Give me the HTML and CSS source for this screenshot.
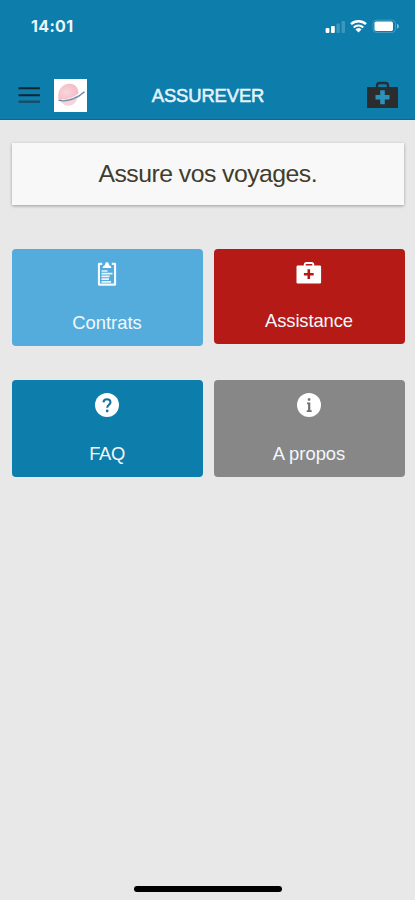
FILE: index.html
```html
<!DOCTYPE html>
<html lang="fr">
<head>
<meta charset="utf-8">
<title>ASSUREVER</title>
<link rel="stylesheet" href="styles.css">
</head>
<body>
<div class="app">
  <header class="header">
    <div class="status">
      <span class="time">14:01</span>
      <svg class="signals" width="76" height="18" viewBox="0 0 76 18">
        <g fill="#fff">
          <rect x=".6" y="11" width="3.8" height="5" rx="1"/>
          <rect x="6" y="9" width="3.8" height="7" rx="1"/>
          <rect x="11.400" y="6.500" width="3.400" height="9.500" rx="1" opacity=".2"/>
          <rect x="16.600" y="4" width="3.400" height="12" rx="1" opacity=".2"/>
          <path d="M30.500 12.500 33.500 15.600l3-3.100a4.300 4.300 0 0 0-6 0z"/>
          <rect x="49.500" y="4.500" width="18.500" height="9.600" rx="1.800"/>
          <path d="M72 6.800v4.900q1.900-.9 1.900-2.450t-1.900-2.450z" opacity=".5"/>
        </g>
        <g fill="none" stroke="#fff">
          <path d="M26 7.200a11 11 0 0 1 15 0" stroke-width="2.500"/>
          <path d="M28.700 10.500a7 7 0 0 1 9.600 0" stroke-width="2"/>
          <rect x="48" y="3.100" width="22.500" height="12.400" rx="3.600" stroke-width=".9" opacity=".25"/>
        </g>
      </svg>
    </div>
    <div class="toolbar">
      <svg class="menu" width="24" height="18" viewBox="0 0 24 18">
        <path d="M1.500 2.300h21.500M1.500 9.200h21.500" stroke="#15252d" stroke-width="2"/>
        <path d="M1.500 15.700h21.500" stroke="#1d485f" stroke-width="2.2"/>
      </svg>
      <svg class="logo" width="33" height="33" viewBox="0 0 33 33">
        <defs><radialGradient id="globe" cx=".4" cy=".55" r=".6">
          <stop offset="0" stop-color="#fad5dc"/><stop offset="1" stop-color="#f3bcc7"/>
        </radialGradient></defs>
        <rect width="33" height="33" fill="#fff"/>
        <path d="M15 4.800c5.500-.5 9.500 3.700 9.500 9.400C19.500 19 12 21 4.600 20.200 2.800 12 7.500 5.300 15 4.800z" fill="url(#globe)"/>
        <path d="M6.500 22.300q8.500.5 17-3.600c-1.500 5.600-5.600 8.400-10 8-2.800-.3-5.200-1.800-7-4.400z" fill="#f8d3db"/>
        <path d="M4.500 21.200C14 23 24 19 30.500 12.800" fill="none" stroke="#7486a3" stroke-width="1.500"/>
        <path d="M8 21.500C17 22 23 18.500 28 15" fill="none" stroke="#83b0bf" stroke-width=".7" stroke-dasharray="3 2"/>
      </svg>
      <h1 class="title">ASSUREVER</h1>
      <svg class="kit" width="31" height="28" viewBox="0 0 31 28">
        <path d="M10 7V4.500Q10 2 12.500 2h6Q21 2 21 4.500V7" fill="none" stroke="#262e32" stroke-width="2.300"/>
        <rect y="6" width="31" height="21" rx=".8" fill="#2a2c2d"/>
        <path d="M13.200 9.200h4.600v4.700h4.700v4.600h-4.700v4.700h-4.600v-4.700H8.500v-4.600h4.700z" fill="#2c91bb"/>
      </svg>
    </div>
  </header>
  <main class="content">
    <p class="banner"><span>Assure vos voyages.</span></p>
    <nav class="grid">
      <a class="tile light">
        <svg width="24" height="26" viewBox="0 0 24 26">
          <path d="M4.200 1.800h3v2.200H5V22.600h14V4h-2.200V1.800h3q1.300 0 1.300 1.300v20.300q0 1.300-1.300 1.300H4.200q-1.300 0-1.300-1.300V3.100q0-1.300 1.300-1.300z" fill="#f4faff"/>
          <path d="M7.600 6.900q.1-2.200 2.300-3 .3-2.900 2.100-2.900t2.100 2.900q2.200.8 2.300 3z" fill="#fff"/>
          <path d="M6.500 10h6M6.500 12.700h11M6.500 15.400h8M6.500 18.100h7.500M6.500 20.800h9.500" stroke="#eaf5fc" stroke-width="1.700"/>
        </svg>
        <span class="contracts">Contrats</span>
      </a>
      <a class="tile red">
        <svg width="26" height="24" viewBox="0 0 26 24">
          <path d="M8.700 5V3.700q0-1.700 1.700-1.700h5.200q1.700 0 1.700 1.700V5" fill="none" stroke="#fff" stroke-width="1.800"/>
          <rect x=".5" y="4.500" width="24.600" height="18" rx="1.300" fill="#fff"/>
          <path d="M12.800 8.300v9.800M7.900 13.200h9.800" stroke="#b51a16" stroke-width="2.600"/>
        </svg>
        <span class="assist">Assistance</span>
      </a>
      <a class="tile blue">
        <svg width="24" height="24" viewBox="0 0 24 24">
          <circle cx="12" cy="12" r="12" fill="#fff"/>
          <path d="M8.500 9.400Q8.600 6.200 12 6.200t3.500 3c0 2.500-3.300 2.700-3.300 5.600" fill="none" stroke="#176f99" stroke-width="2"/>
          <circle cx="12.200" cy="17.900" r="1.350" fill="#176f99"/>
        </svg>
        <span class="faq">FAQ</span>
      </a>
      <a class="tile gray">
        <svg width="24" height="24" viewBox="0 0 24 24">
          <circle cx="12" cy="12" r="12" fill="#fff"/>
          <path d="M10 9.600h3.300v7.700h1.400V19H9.700v-1.700h1.400v-6H10z" fill="#707070"/>
          <rect x="10.800" y="5.200" width="2.600" height="2.500" rx=".7" fill="#707070"/>
        </svg>
        <span class="about">A propos</span>
      </a>
    </nav>
  </main>
  <footer class="home"><div class="indicator"></div></footer>
</div>
</body>
</html>
```
FILE: styles.css
```css
* { box-sizing: border-box; }

body {
  margin: 0;
  background: #e8e8e8;
  font-family: "Liberation Sans", Arial, sans-serif;
}

.app {
  display: flex;
  flex-direction: column;
  height: 900px;
}

.header {
  height: 120px;
  padding-top: 16px;
  background: #0d7dac;
  border-bottom: 1px solid #086a99;
}

.status {
  display: flex;
  align-items: center;
  justify-content: space-between;
  height: 20px;
  padding: 0 14px 0 31px;
}

.time {
  font: 700 16px/20px Inter, sans-serif;
  letter-spacing: .35px;
  color: #eaf7ff;
}

.toolbar {
  display: grid;
  grid-template-columns: 24px 33px 1fr 31px;
  align-items: center;
  height: 34px;
  margin-top: 42px;
  padding: 0 17px 0 17px;
}

.logo { margin-left: 12.500px; }

.title {
  margin: 0;
  padding: 2px 25px 0 0;
  font-size: 18.400px;
  font-weight: 400;
  line-height: 32px;
  letter-spacing: -.1px;
  text-align: center;
  color: #e4f4fc;
  -webkit-text-stroke: .55px #e4f4fc;
}

.content { padding: 23px 11px 0 11.500px; }

.banner {
  display: flex;
  align-items: center;
  justify-content: center;
  height: 62px;
  margin: 0 0 44px;
  background: #f8f8f8;
  box-shadow: 0 1px 3px rgba(0, 0, 0, .32);
  color: #403d2d;
  font-size: 24.800px;
  letter-spacing: -.54px;
}

.grid {
  display: grid;
  grid-template-columns: 191px 191px;
  grid-template-rows: 97px 97px;
  gap: 34px 11px;
}

.tile {
  display: flex;
  flex-direction: column;
  align-items: center;
  justify-content: space-between;
  height: 97px;
  padding: 13px 0 12px;
  border-radius: 4px;
  color: #f2f8fc;
  font-size: 18.400px;
  line-height: 22px;
}

.light { padding-top: 12px; background: #54acdd; }
.red { height: 94.500px; padding: 12px 0; background: #b51a16; }
.assist { letter-spacing: -.1px; }
.faq { letter-spacing: -.35px; }
.blue { background: #0d7dac; }
.gray { background: #878787; }

.home {
  display: flex;
  justify-content: center;
  margin-top: auto;
  padding-bottom: 8px;
}

.indicator {
  width: 148px;
  height: 6px;
  border-radius: 3px;
  background: #000;
}
```
